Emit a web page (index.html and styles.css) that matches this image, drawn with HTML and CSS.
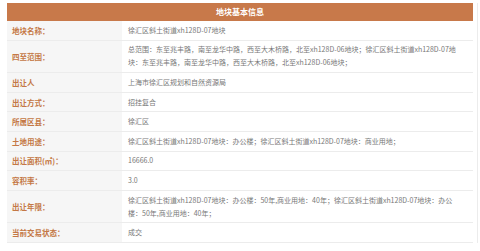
FILE: index.html
```html
<!DOCTYPE html>
<html lang="zh-CN">
<head>
<meta charset="utf-8">
<title>地块基本信息</title>
<link rel="stylesheet" href="styles.css">
</head>
<body>
<div class="frame">
  <table class="info">
    <colgroup>
      <col class="col-label">
      <col class="col-value">
    </colgroup>
    <thead>
      <tr><th colspan="2" class="head">地块基本信息</th></tr>
    </thead>
    <tbody>
      <tr><td class="label">地块名称：</td><td class="value">徐汇区斜土街道xh128D-07地块</td></tr>
      <tr class="double"><td class="label">四至范围：</td><td class="value">总范围：东至兆丰路，南至龙华中路，西至大木桥路，北至xh128D-06地块；徐汇区斜土街道xh128D-07地<br>块：东至兆丰路，南至龙华中路，西至大木桥路，北至xh128D-06地块；</td></tr>
      <tr><td class="label">出让人</td><td class="value">上海市徐汇区规划和自然资源局</td></tr>
      <tr><td class="label">出让方式：</td><td class="value">招挂复合</td></tr>
      <tr><td class="label">所属区县：</td><td class="value">徐汇区</td></tr>
      <tr><td class="label">土地用途：</td><td class="value">徐汇区斜土街道xh128D-07地块：办公楼；徐汇区斜土街道xh128D-07地块：商业用地；</td></tr>
      <tr><td class="label">出让面积(㎡)：</td><td class="value">16666.0</td></tr>
      <tr><td class="label">容积率：</td><td class="value">3.0</td></tr>
      <tr class="double"><td class="label">出让年限：</td><td class="value">徐汇区斜土街道xh128D-07地块：办公楼：50年,商业用地：40年；徐汇区斜土街道xh128D-07地块：办公<br>楼：50年,商业用地：40年；</td></tr>
      <tr><td class="label">当前交易状态：</td><td class="value">成交</td></tr>
    </tbody>
  </table>
</div>
</body>
</html>
```

FILE: styles.css
```css
html, body {
  margin: 0;
  padding: 0;
  background: #ffffff;
}

body {
  padding: 3px 2px 0 7px;
  font-family: "Noto Sans CJK SC", "Noto Sans", sans-serif;
}

.frame {
  width: 466px;
  padding-right: 4px;
  border-right: 1px solid #ececec;
}

.info {
  width: 466px;
  border-collapse: collapse;
  table-layout: fixed;
}

.col-label {
  width: 115px;
}

.col-value {
  width: 351px;
}

.head {
  height: 18px;
  padding: 0;
  background: #c8794a;
  color: #ffffff;
  font-size: 8px;
  font-weight: 700;
  line-height: 18px;
  text-align: center;
}

.info td {
  border-bottom: 1px solid #ececec;
  padding: 2.8px 0;
  line-height: 13px;
  vertical-align: middle;
}

.label {
  padding-left: 5px !important;
  background: #f6f6f6;
  color: #c47845;
  font-size: 7.5px;
  font-weight: 700;
  white-space: nowrap;
}

.value {
  padding-left: 6px !important;
  padding-right: 2px !important;
  background: #ffffff;
  color: #787878;
  font-size: 7px;
  white-space: nowrap;
}
```
